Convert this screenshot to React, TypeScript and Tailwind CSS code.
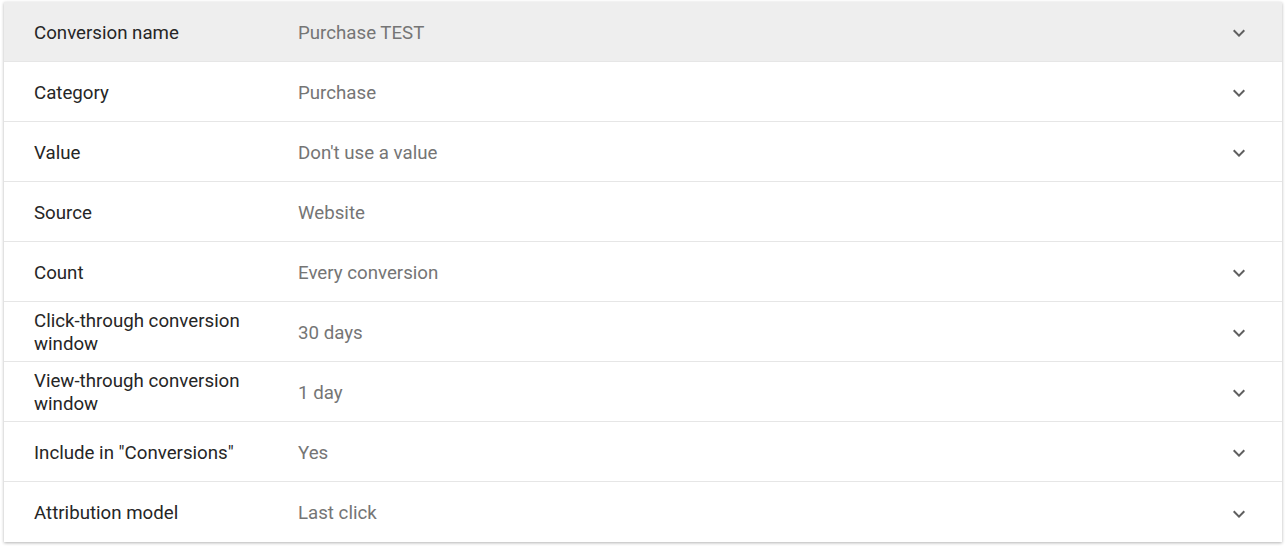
import React from "react";

const rows: { label: string; value: string; chevron: boolean }[] = [
  { label: "Conversion name", value: "Purchase TEST", chevron: true },
  { label: "Category", value: "Purchase", chevron: true },
  { label: "Value", value: "Don't use a value", chevron: true },
  { label: "Source", value: "Website", chevron: false },
  { label: "Count", value: "Every conversion", chevron: true },
  { label: "Click-through conversion window", value: "30 days", chevron: true },
  { label: "View-through conversion window", value: "1 day", chevron: true },
  { label: "Include in \"Conversions\"", value: "Yes", chevron: true },
  { label: "Attribution model", value: "Last click", chevron: true },
];

function Chevron() {
  return (
    <svg width="24" height="24" viewBox="0 0 24 24" className="text-[#5f5f5f]">
      <path d="M7.41 8.59 12 13.17l4.59-4.58L18 10l-6 6-6-6 1.41-1.41z" fill="currentColor" />
    </svg>
  );
}

export default function App() {
  return (
    <div className="w-[1286px] h-[546px] bg-white pt-[2px] px-[4px]" style={{ fontFamily: "Roboto, 'Liberation Sans', sans-serif" }}>
      <div className="bg-white shadow-[0_1px_3px_rgba(0,0,0,0.3)]">
        {rows.map((r, i) => (
          <div
            key={r.label}
            className={`flex items-center h-[60px] pt-[3px] border-b border-[#e6e6e6] last:border-b-0 ${i === 0 ? "bg-[#eeeeee]" : "bg-white"}`}
          >
            <div className="w-[294px] pl-[30px] pr-[44px] text-[18.7px] leading-[23px] text-[#262626]">{r.label}</div>
            <div className="flex-1 text-[18.7px] leading-[23px] text-[#757575]">{r.value}</div>
            <div className="w-[24px] mr-[31px] flex items-center justify-center">{r.chevron ? <Chevron /> : null}</div>
          </div>
        ))}
      </div>
    </div>
  );
}
